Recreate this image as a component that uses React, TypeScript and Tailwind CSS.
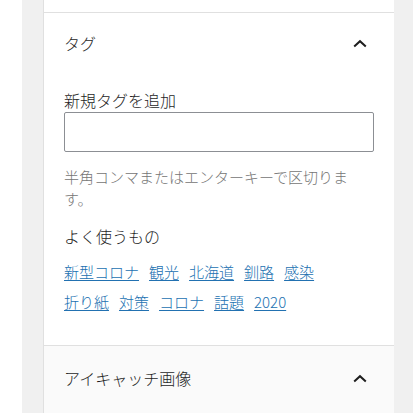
import React from 'react';

const font = { fontFamily: '"Noto Sans CJK JP", "Noto Sans", sans-serif' };

const ChevronUp = () => (
  <svg width="14" height="9" viewBox="0 0 14 9" fill="none">
    <polyline points="1.2,7.6 7,2.2 12.8,7.6" stroke="#1e1e1e" strokeWidth="2" strokeLinecap="butt" strokeLinejoin="miter" />
  </svg>
);

const rowOne = ["新型コロナ", "観光", "北海道", "釧路", "感染"];
const rowTwo = ["折り紙", "対策", "コロナ", "話題", "2020"];

const App = () => {
  return (
    <div className="flex h-[413px] w-[413px] overflow-hidden bg-white font-light text-[#1e1e1e]" style={font}>
      <div className="w-[22px] bg-white" />
      <div className="w-[21px] bg-[#f0f0f0]" />

      <div className="flex w-[351px] flex-col border-l border-[#e0e0e0] bg-white">
        <div className="h-[13px] border-b border-[#e0e0e0]" />

        <section className="pl-5 pr-[27px] pb-[28px]">
          <div className="flex h-[60px] items-center justify-between">
            <h2 className="text-[16px] leading-6">タグ</h2>
            <ChevronUp />
          </div>

          <label className="mt-[15px] block text-[16px] leading-6">新規タグを追加</label>
          <input className="block h-[40px] w-[310px] rounded-[2px] border border-[#8c8f94] bg-white px-2 outline-none" />

          <p className="mt-[14px] w-[310px] text-[15px] leading-[22px] text-[#757575]">
            半角コンマまたはエンターキーで区切ります。
          </p>

          <h3 className="mt-[14px] text-[16px] leading-6">よく使うもの</h3>

          <div className="mt-[9px] text-[15px] leading-[30px] text-[#2271b1]">
            <div className="flex gap-x-[10px]">
              {rowOne.map(tag => (
                <a href="#" key={tag} className="underline underline-offset-2">{tag}</a>
              ))}
            </div>
            <div className="flex gap-x-[10px]">
              {rowTwo.map(tag => (
                <a href="#" key={tag} className="underline underline-offset-2">{tag}</a>
              ))}
            </div>
          </div>
        </section>

        <section className="flex-1 border-t border-[#e0e0e0] bg-[#fafafa] pl-5 pr-[27px]">
          <div className="flex h-[64px] items-center justify-between">
            <h2 className="text-[16px] leading-6">アイキャッチ画像</h2>
            <ChevronUp />
          </div>
        </section>
      </div>

      <div className="flex-1 bg-[#f0f0f0]" />
    </div>
  );
};

export default App;
